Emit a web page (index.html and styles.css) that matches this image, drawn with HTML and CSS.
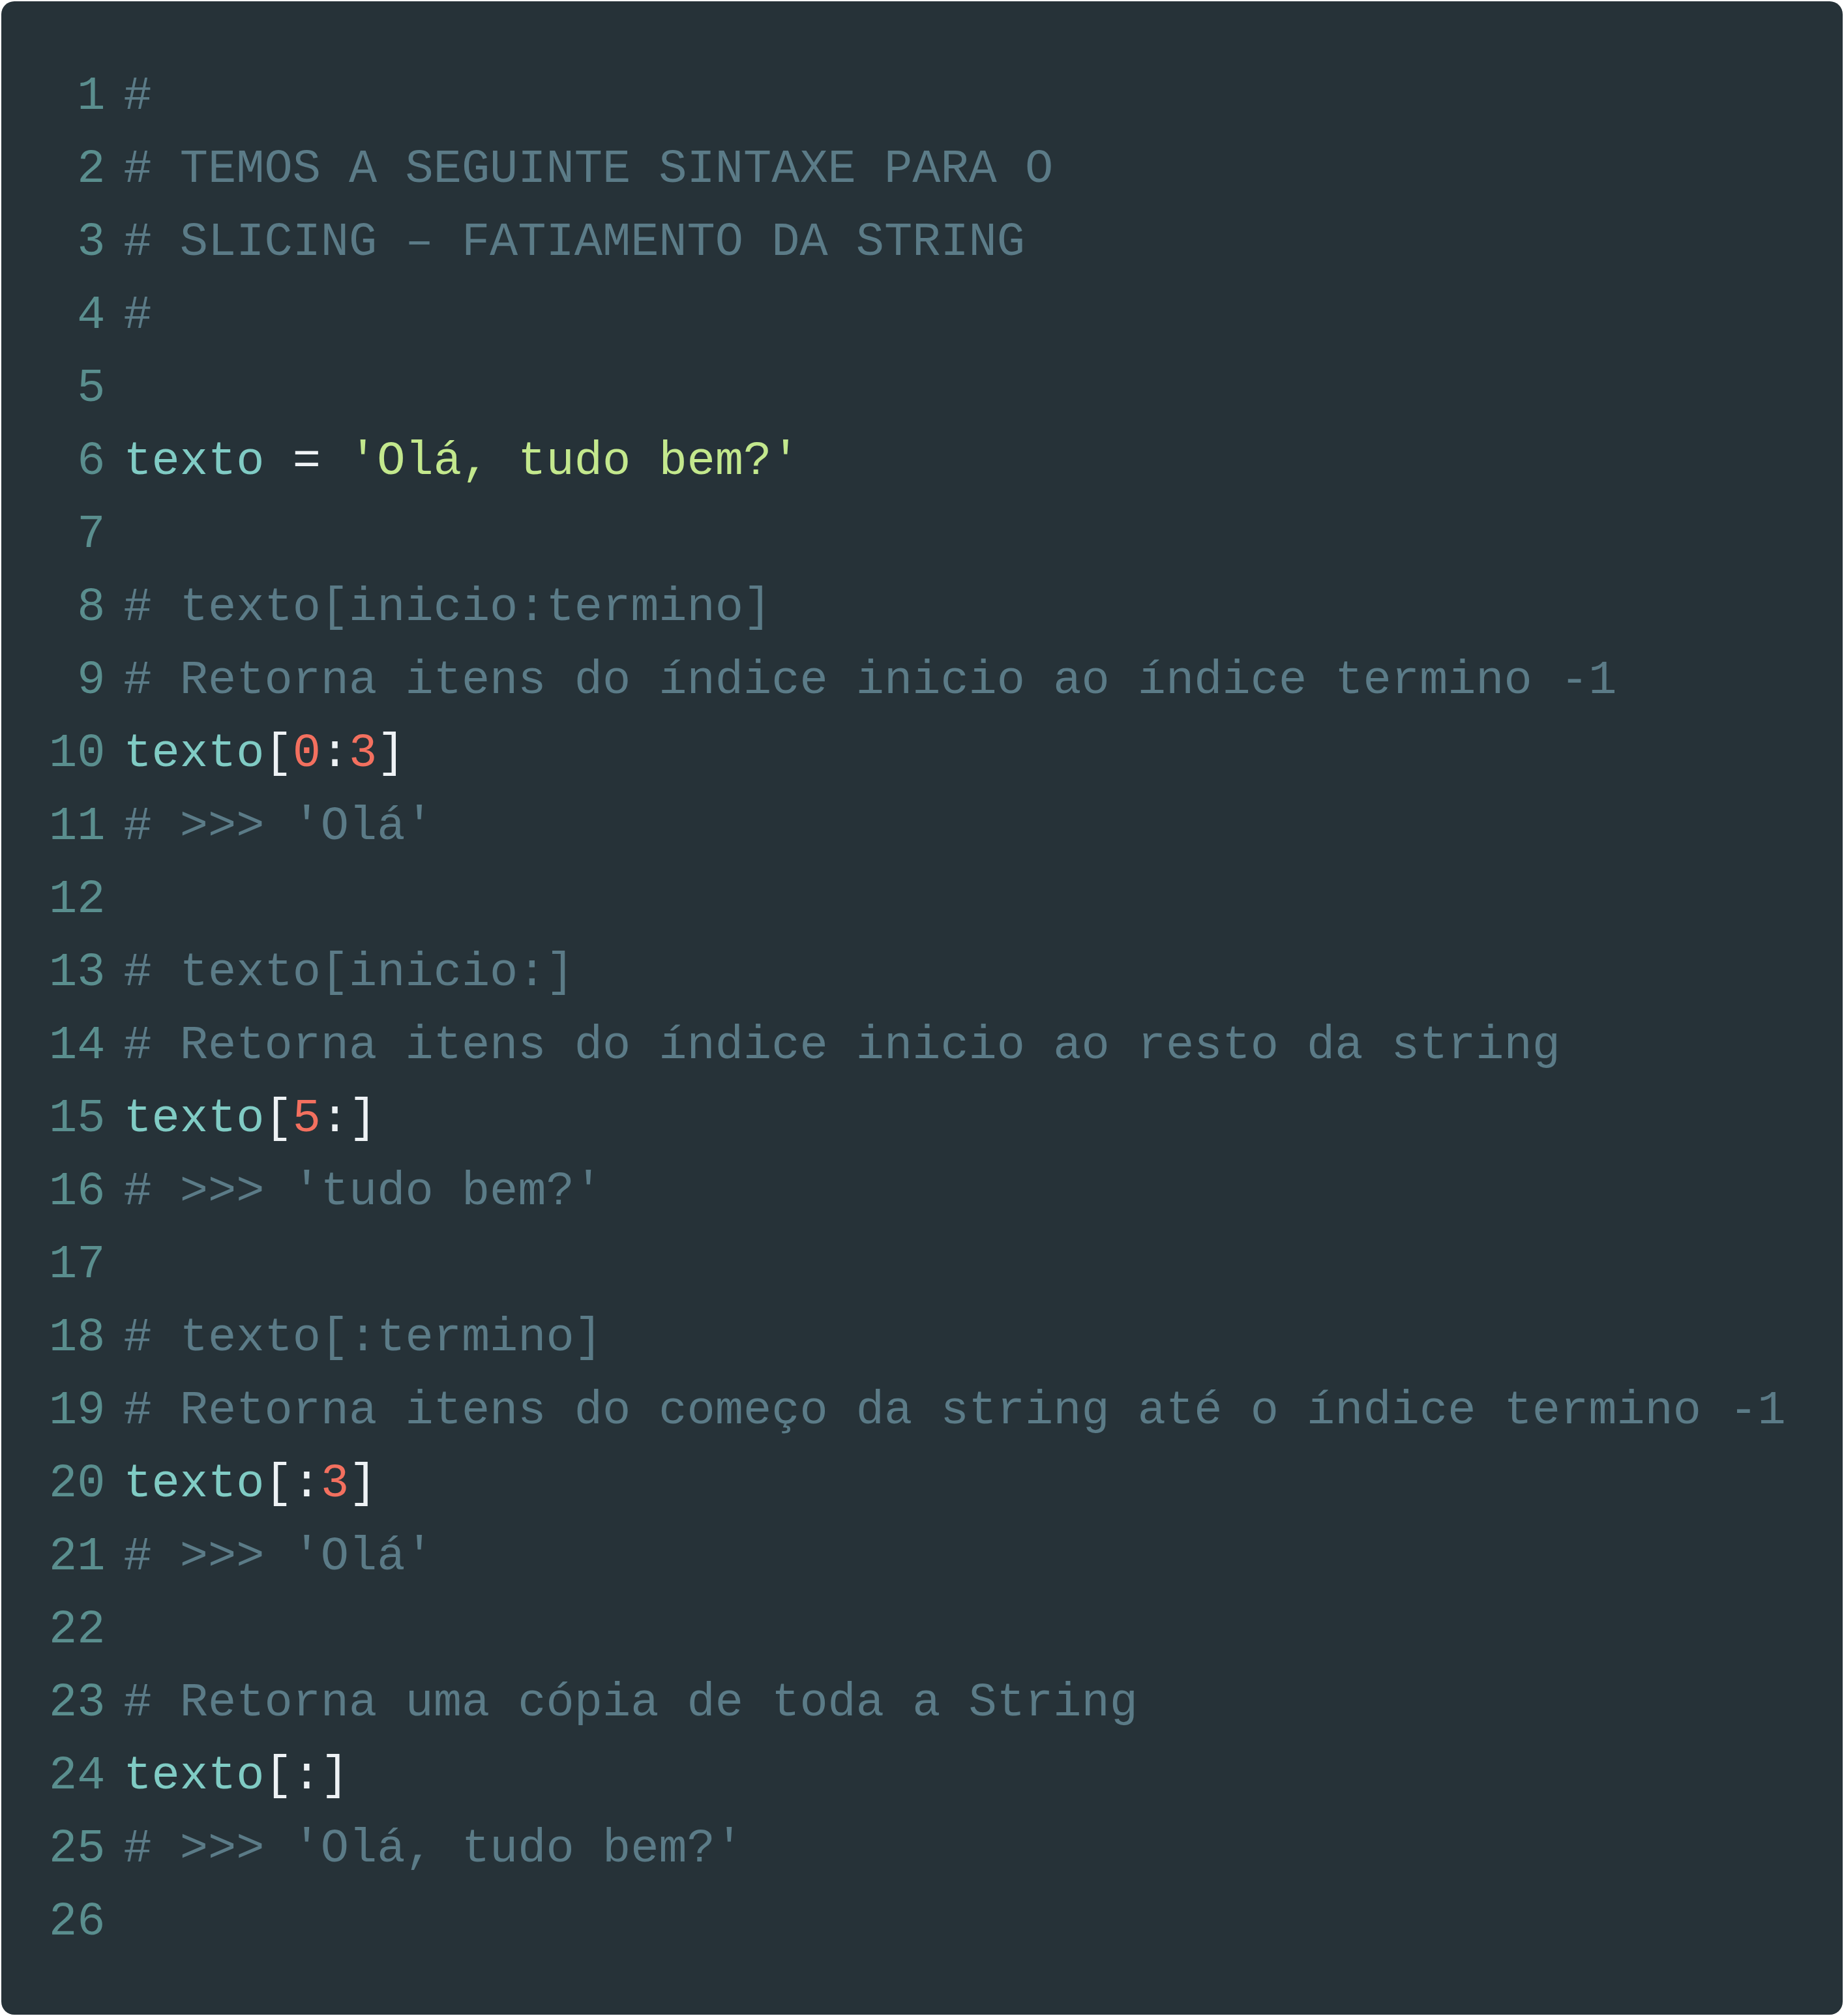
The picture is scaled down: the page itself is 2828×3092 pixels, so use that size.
FILE: index.html
```html
<!DOCTYPE html>
<html lang="pt">
<head>
<meta charset="utf-8">
<title>Slicing</title>
<link rel="stylesheet" href="styles.css">
</head>
<body>
<div class="card">
  <div class="code">
    <div class="line"><span class="num">1</span><span class="src"><span class="c">#</span></span></div>
    <div class="line"><span class="num">2</span><span class="src"><span class="c"># TEMOS A SEGUINTE SINTAXE PARA O</span></span></div>
    <div class="line"><span class="num">3</span><span class="src"><span class="c"># SLICING – FATIAMENTO DA STRING</span></span></div>
    <div class="line"><span class="num">4</span><span class="src"><span class="c">#</span></span></div>
    <div class="line"><span class="num">5</span><span class="src"></span></div>
    <div class="line"><span class="num">6</span><span class="src"><span class="v">texto</span> <span class="p">=</span> <span class="s">'Olá, tudo bem?'</span></span></div>
    <div class="line"><span class="num">7</span><span class="src"></span></div>
    <div class="line"><span class="num">8</span><span class="src"><span class="c"># texto[inicio:termino]</span></span></div>
    <div class="line"><span class="num">9</span><span class="src"><span class="c"># Retorna itens do índice inicio ao índice termino -1</span></span></div>
    <div class="line"><span class="num">10</span><span class="src"><span class="v">texto</span><span class="p">[</span><span class="n">0</span><span class="p">:</span><span class="n">3</span><span class="p">]</span></span></div>
    <div class="line"><span class="num">11</span><span class="src"><span class="c"># &gt;&gt;&gt; 'Olá'</span></span></div>
    <div class="line"><span class="num">12</span><span class="src"></span></div>
    <div class="line"><span class="num">13</span><span class="src"><span class="c"># texto[inicio:]</span></span></div>
    <div class="line"><span class="num">14</span><span class="src"><span class="c"># Retorna itens do índice inicio ao resto da string</span></span></div>
    <div class="line"><span class="num">15</span><span class="src"><span class="v">texto</span><span class="p">[</span><span class="n">5</span><span class="p">:]</span></span></div>
    <div class="line"><span class="num">16</span><span class="src"><span class="c"># &gt;&gt;&gt; 'tudo bem?'</span></span></div>
    <div class="line"><span class="num">17</span><span class="src"></span></div>
    <div class="line"><span class="num">18</span><span class="src"><span class="c"># texto[:termino]</span></span></div>
    <div class="line"><span class="num">19</span><span class="src"><span class="c"># Retorna itens do começo da string até o índice termino -1</span></span></div>
    <div class="line"><span class="num">20</span><span class="src"><span class="v">texto</span><span class="p">[:</span><span class="n">3</span><span class="p">]</span></span></div>
    <div class="line"><span class="num">21</span><span class="src"><span class="c"># &gt;&gt;&gt; 'Olá'</span></span></div>
    <div class="line"><span class="num">22</span><span class="src"></span></div>
    <div class="line"><span class="num">23</span><span class="src"><span class="c"># Retorna uma cópia de toda a String</span></span></div>
    <div class="line"><span class="num">24</span><span class="src"><span class="v">texto</span><span class="p">[:]</span></span></div>
    <div class="line"><span class="num">25</span><span class="src"><span class="c"># &gt;&gt;&gt; 'Olá, tudo bem?'</span></span></div>
    <div class="line"><span class="num">26</span><span class="src"></span></div>
  </div>
</div>
</body>
</html>
```
FILE: styles.css
```css
html, body {
  margin: 0;
  padding: 0;
  background: #ffffff;
}
body {
  padding: 2px;
  width: 2824px;
  height: 3088px;
}
.card {
  box-sizing: border-box;
  width: 2824px;
  height: 3088px;
  background: #263238;
  border-radius: 20px;
  padding: 90px 40px 0 73px;
}
.code {
  font-family: "Liberation Mono", "DejaVu Sans Mono", monospace;
  font-size: 72px;
  line-height: 112px;
  color: #5b7b87;
}
.line {
  display: flex;
  white-space: pre;
  height: 112px;
}
.num {
  width: 2ch;
  flex: none;
  text-align: right;
  color: #5a8e8e;
  margin-right: 28px;
}
.src {
  flex: 1;
}
.c { color: #5b7b87; }
.v { color: #80cbc4; }
.s { color: #c3e88d; }
.n { color: #f3705f; }
.p { color: #eef2f5; }
```
